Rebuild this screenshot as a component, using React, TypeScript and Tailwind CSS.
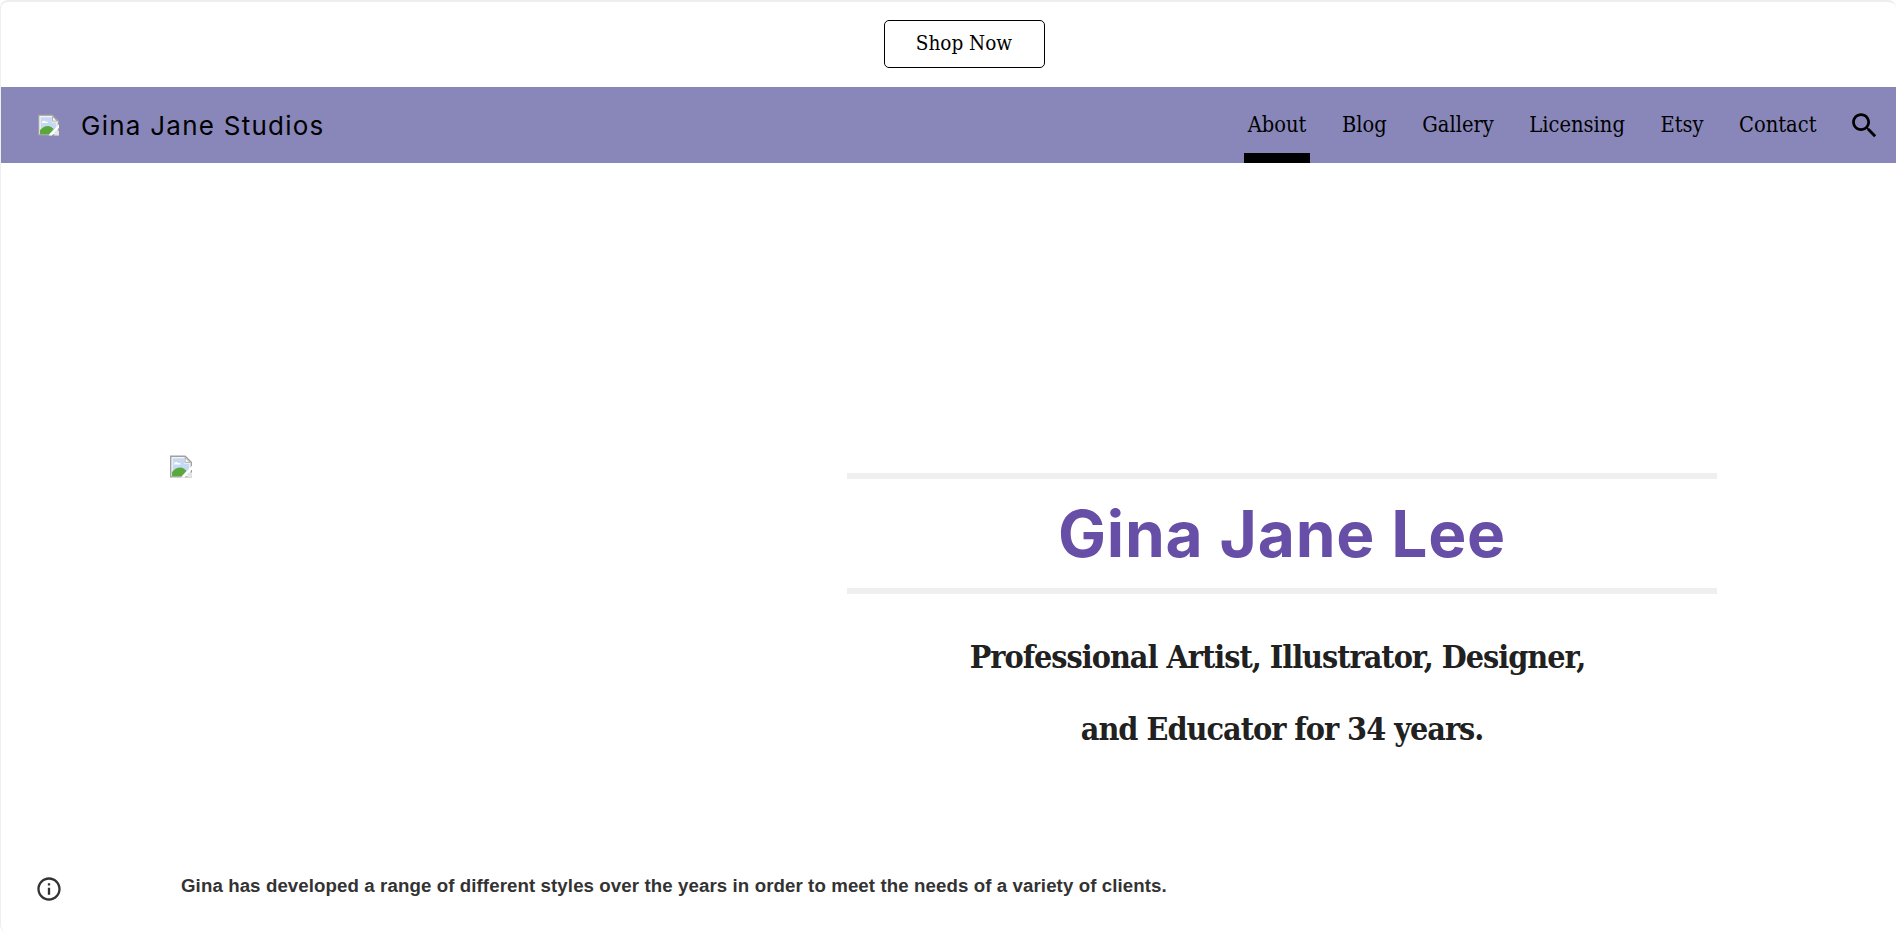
const navItems = ['About', 'Blog', 'Gallery', 'Licensing', 'Etsy', 'Contact']

function BrokenImage({ className }: { className: string }) {
	return (
		<svg viewBox="0 0 16 16" className={className}>
			<path d="M.5.5h10.500l4.500 4.500v10.500H.5z" fill="#f4f4f4" stroke="#a0a0a0" />
			<path d="M2 2h8.500v4h3.500v8H2z" fill="#c5d9f5" />
			<path d="M3 5.500c1-1 2-1 3 0h1.500v1H3z" fill="#fff" />
			<path d="M11 1.500v3.500h3.500z" fill="#fff" stroke="#a0a0a0" strokeWidth="0.6" />
			<path d="M1.500 15v-3c2.500-3 6-4 8.500-2.500l2 1.500-3.500 4z" fill="#5aa83c" />
			<path d="M8 16l8-8.500v2.500l-5.500 6z" fill="#fff" />
			<path d="M12 16l4-4v4z" fill="#dfe8d8" />
		</svg>
	)
}

export default function App() {
	return (
		<div className="relative h-[933px] w-full overflow-hidden rounded-lg border-t-2 border-l border-[#eeeeee] bg-white">
			<div className="flex h-[85px] items-center justify-center pb-[2px] pl-[31px]">
				<a className="flex h-[48px] w-[161px] items-center justify-center rounded-[5px] border border-black font-['DejaVu_Serif_Condensed',serif] text-[20.5px] text-black">
					Shop Now
				</a>
			</div>

			<header className="flex h-[76px] items-center bg-[#8987ba] pl-[37px] pr-[15px]">
				<BrokenImage className="h-[22px] w-[21px]" />
				<span className="ml-[22px] font-['Inter',sans-serif] text-[26px] tracking-[1.25px] text-black">
					Gina Jane Studios
				</span>
				<nav className="ml-auto flex h-full items-center">
					{navItems.map((item) => (
						<a
							key={item}
							className={`mr-[27.5px] flex h-full items-center px-[4px] font-['DejaVu_Serif_Condensed',serif] text-[21.7px] text-black ${
								item === 'About' ? 'border-b-[10px] border-black pt-[11px]' : 'pt-[1px]'
							}`}
						>
							{item}
						</a>
					))}
				</nav>
				<svg viewBox="0 0 24 24" className="h-[33px] w-[33px]" fill="#000">
					<path d="M15.500 14h-.79l-.28-.27C15.410 12.590 16 11.110 16 9.500 16 5.910 13.090 3 9.500 3S3 5.910 3 9.500 5.910 16 9.500 16c1.610 0 3.090-.59 4.230-1.570l.27.28v.79l5 4.990L20.490 19l-4.990-5zm-6 0C7.010 14 5 11.990 5 9.500S7.010 5 9.500 5 14 7.010 14 9.500 11.990 14 9.500 14z" />
				</svg>
			</header>

			<main className="flex pl-[169px] pt-[292px]">
				<BrokenImage className="h-[23px] w-[22px]" />
				<section className="ml-[655px] w-[870px] pt-[18px]">
					<div className="h-[6px] bg-[#efefef]" />
					<h1 className="flex h-[109px] items-center justify-center font-['Inter',sans-serif] text-[64px] font-bold tracking-[0.8px] text-[#674ea7]">
						Gina Jane Lee
					</h1>
					<div className="h-[6px] bg-[#efefef]" />
					<h2 className="mt-[27px] text-center font-['DejaVu_Serif_Condensed',serif] text-[32px] leading-[72px] font-bold tracking-[-1px] text-[#212121]">
						Professional Artist, Illustrator, Designer,{'\u00a0'}
						<br />
						and Educator for 34 years.
					</h2>
				</section>
			</main>

			<p className="absolute top-[870px] left-[180px] font-['Liberation_Sans',sans-serif] text-[18.67px] font-bold tracking-[0.1px] text-[#333333]">
				Gina has developed a range of different styles over the years in order to meet the needs of a variety of clients.
			</p>

			<svg viewBox="0 0 24 24" className="absolute top-[873px] left-[34px] h-[28px] w-[28px]" fill="#333333">
				<path d="M11 7h2v2h-2zm0 4h2v6h-2zm1-9C6.480 2 2 6.480 2 12s4.480 10 10 10 10-4.480 10-10S17.520 2 12 2zm0 18c-4.410 0-8-3.590-8-8s3.590-8 8-8 8 3.590 8 8-3.590 8-8 8z" />
			</svg>
		</div>
	)
}
